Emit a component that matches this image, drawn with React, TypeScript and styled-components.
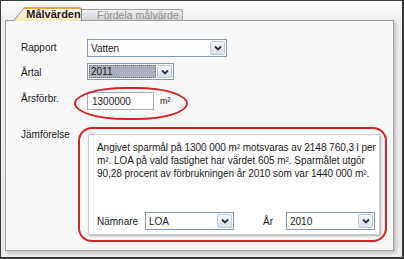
import React from 'react'
import styled, { createGlobalStyle } from 'styled-components'

const GlobalStyle = createGlobalStyle`
  html, body {
    margin: 0;
    padding: 0;
    background: #ffffff;
  }
  body {
    font-family: "Liberation Sans", Arial, sans-serif;
  }
`

const Window = styled.div`
  box-sizing: border-box;
  width: 404px;
  height: 259px;
  border: solid #3a3a3a;
  border-width: 1px 2px 2px 1px;
  background: linear-gradient(#ffffff, #eeeeee 19px, #ebebeb);
  display: flex;
  flex-direction: column;
  font-family: "Liberation Sans", Arial, sans-serif;
  font-size: 10px;
  color: #1b1b1b;
`

const TabStrip = styled.div`
  height: 19px;
  flex: none;
  display: flex;
  align-items: flex-end;
  padding-left: 12px;
  position: relative;
  z-index: 2;
`

// office style tab: slanted left edge drawn by a skewed ::before
const Tab = styled.div<{ $active?: boolean }>`
  position: relative;
  box-sizing: border-box;
  height: ${(p) => (p.$active ? 14 : 11)}px;
  width: ${(p) => (p.$active ? 69 : 115)}px;
  margin-bottom: ${(p) => (p.$active ? -1 : 0)}px;
  margin-left: ${(p) => (p.$active ? 0 : -14)}px;
  padding-left: ${(p) => (p.$active ? 12 : 29)}px;
  z-index: ${(p) => (p.$active ? 2 : 1)};
  display: flex;
  align-items: center;
  justify-content: ${(p) => (p.$active ? 'center' : 'flex-start')};
  font-size: ${(p) => (p.$active ? 11 : 10.5)}px;
  font-weight: ${(p) => (p.$active ? 'bold' : 'normal')};
  color: ${(p) => (p.$active ? '#1d1d1d' : '#8f8f8f')};
  white-space: nowrap;

  &::before,
  &::after {
    content: '';
    position: absolute;
    top: 0;
    bottom: 0;
    z-index: -1;
    background: ${(p) =>
      p.$active
        ? 'linear-gradient(#fff8ea, #fce6bb)'
        : 'linear-gradient(#f0f0f0, #d3d3d3)'};
    border: 1px solid ${(p) => (p.$active ? '#8a8a8a' : '#a3a3a3')};
    border-top: ${(p) => (p.$active ? '2px solid #f2a23a' : '1px solid #a3a3a3')};
    border-bottom: none;
  }
  &::before {
    left: 0;
    width: 26px;
    border-right: none;
    transform-origin: bottom left;
    transform: skewX(-40deg);
  }
  &::after {
    left: 12px;
    right: 0;
    border-left: none;
    border-radius: 0 3px 0 0;
  }
`

const Panel = styled.div`
  box-sizing: border-box;
  flex: none;
  margin-left: 4px;
  width: 389px;
  height: 231px;
  background: #f8f8f8;
  border: 1px solid #a0a0a0;
  box-shadow: 2px 2px 3px rgba(0, 0, 0, 0.18);
  padding: 18px 0 0 15px;
`

const Row = styled.div<{ $gap?: number }>`
  display: flex;
  align-items: flex-start;
  margin-top: ${(p) => p.$gap ?? 0}px;
`

const Label = styled.div<{ $offset?: number }>`
  width: 66px;
  flex: none;
  line-height: 12px;
  padding-top: ${(p) => p.$offset ?? 0}px;
`

const SelectBox = styled.div<{ $w: number; $h?: number }>`
  box-sizing: border-box;
  width: ${(p) => p.$w}px;
  height: ${(p) => p.$h ?? 18}px;
  flex: none;
  display: flex;
  background: #ffffff;
  border: 1px solid #7f9db9;
  padding: 1px;
`

const SelectValue = styled.span<{ $selected?: boolean }>`
  flex: 1;
  display: flex;
  align-items: center;
  padding-left: 2px;
  margin-right: 1px;
  background: ${(p) => (p.$selected ? '#aeb0c2' : 'transparent')};
  outline: ${(p) => (p.$selected ? '1px dotted #6c6c78' : 'none')};
  outline-offset: -1px;
`

const DropButton = styled.span`
  box-sizing: border-box;
  width: 15px;
  flex: none;
  display: flex;
  align-items: center;
  justify-content: center;
  background: linear-gradient(#f5f7fb, #d8e0ec);
  border: 1px solid #bccadc;
  border-radius: 2px;
`

const InputWrap = styled.div`
  position: relative;
  display: flex;
  align-items: center;
`

const TextInput = styled.div`
  box-sizing: border-box;
  width: 67px;
  height: 18px;
  display: flex;
  align-items: center;
  padding-left: 4px;
  background: #ffffff;
  border: 1px solid #a7aeb8;
`

const Unit = styled.span`
  margin-left: 6px;
  font-size: 9px;
`

// the red marker rings lie on top of the form
const MarkRing = styled.div`
  position: absolute;
  left: -13px;
  top: -5px;
  width: 114px;
  height: 33px;
  box-sizing: border-box;
  border: 2px solid #d42626;
  border-radius: 45% / 50%;
  pointer-events: none;
`

const MarkFrame = styled.div`
  box-sizing: border-box;
  margin-left: -9px;
  width: 309px;
  height: 115px;
  border: 2px solid #d42626;
  border-radius: 14px;
  padding: 5px 5px 5px 8px;
`

const CompareBox = styled.div`
  box-sizing: border-box;
  height: 100%;
  background: #ffffff;
  border: 1px solid #cdcdcd;
  box-shadow: 1px 1px 2px rgba(0, 0, 0, 0.3);
  padding: 6px 8px 4px 8px;
  display: flex;
  flex-direction: column;
  justify-content: space-between;
`

const Summary = styled.div`
  line-height: 13px;
  letter-spacing: -0.05px;
`

const Line = styled.span`
  display: block;
  white-space: nowrap;
`

const FilterRow = styled.div`
  display: flex;
  align-items: center;
`

const FilterLabel = styled.span<{ $w: number; $gap?: number }>`
  width: ${(p) => p.$w}px;
  margin-left: ${(p) => p.$gap ?? 0}px;
  flex: none;
`

function Chevron() {
  return (
    <svg width="8" height="6" viewBox="0 0 8 6">
      <polyline points="1,1.5 4,4.5 7,1.5" fill="none" stroke="#243552" strokeWidth="1.8" />
    </svg>
  )
}

function Select({ value, width, height, selected }: { value: string; width: number; height?: number; selected?: boolean }) {
  return (
    <SelectBox $w={width} $h={height}>
      <SelectValue $selected={selected}>{value}</SelectValue>
      <DropButton>
        <Chevron />
      </DropButton>
    </SelectBox>
  )
}

export default function App() {
  return (
    <>
      <GlobalStyle />
      <Window>
        <TabStrip>
          <Tab $active>Målvärden</Tab>
          <Tab>Fördela målvärde</Tab>
        </TabStrip>
        <Panel>
          <Row>
            <Label $offset={3}>Rapport</Label>
            <Select value="Vatten" width={140} />
          </Row>
          <Row $gap={6}>
            <Label $offset={4}>Årtal</Label>
            <Select value="2011" width={87} height={17} selected />
          </Row>
          <Row $gap={12}>
            <Label $offset={1}>Årsförbr.</Label>
            <InputWrap>
              <TextInput>1300000</TextInput>
              <Unit>m²</Unit>
              <MarkRing />
            </InputWrap>
          </Row>
          <Row $gap={17}>
            <Label $offset={2}>Jämförelse</Label>
            <MarkFrame>
              <CompareBox>
                <Summary>
                  <Line>Angivet sparmål på 1300 000 m² motsvaras av 2148 760,3 l per</Line>
                  <Line>m². LOA på vald fastighet har värdet 605 m². Sparmålet utgör</Line>
                  <Line>90,28 procent av förbrukningen år 2010 som var 1440 000 m².</Line>
                </Summary>
                <FilterRow>
                  <FilterLabel $w={48}>Nämnare</FilterLabel>
                  <Select value="LOA" width={89} />
                  <FilterLabel $w={23} $gap={29}>År</FilterLabel>
                  <Select value="2010" width={89} />
                </FilterRow>
              </CompareBox>
            </MarkFrame>
          </Row>
        </Panel>
      </Window>
    </>
  )
}
